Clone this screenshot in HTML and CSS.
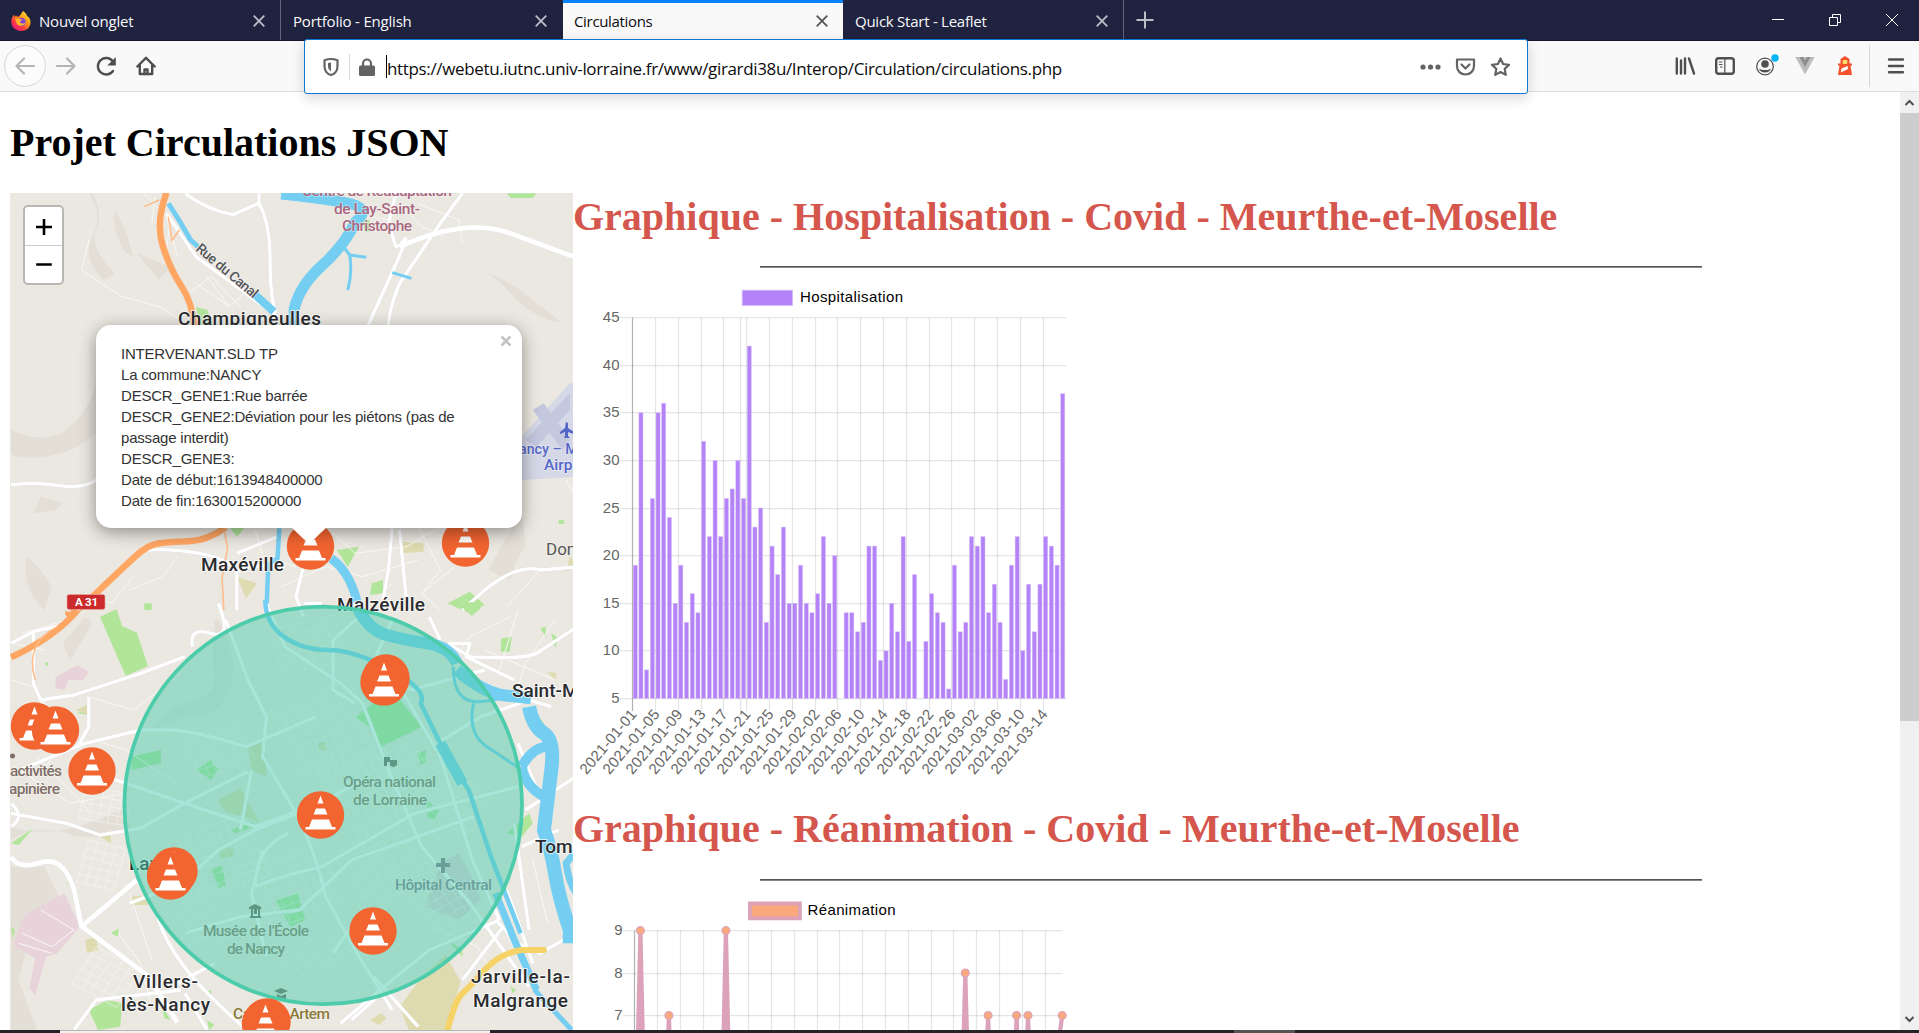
FILE: index.html
```
<!DOCTYPE html>
<html lang="fr">
<head>
<meta charset="utf-8">
<title>Circulations</title>
<link rel="stylesheet" href="styles.css">
</head>
<body>
<header class="tabs">
  <div class="tab">
    <svg class="favicon" viewBox="0 0 20 20"><defs><linearGradient id="fx" x1="1" y1="0" x2=".2" y2="1"><stop offset="0" stop-color="#fff44f"/><stop offset=".45" stop-color="#ff980e"/><stop offset=".75" stop-color="#ff3647"/><stop offset="1" stop-color="#e31587"/></linearGradient></defs><path fill="url(#fx)" d="M12 0c3 2 4 4 4 5 2 1 4 4 3.500 7C19 17 15 20 10 20S.5 16.500.3 11C.2 8 1.500 5 3 3.500V6l2-1.500L7 6c2-1 3-3 5-6z"/><circle cx="10.500" cy="11" r="4.300" fill="#8045d8"/><path fill="#ffb52e" d="M4 8c3-1 5 0 8 1-2 0-3 1-3 2 1 2 4 2 6 0-1 4-7 5-9 2-1-2-1-4-2-5z"/></svg>
    <span class="t1">Nouvel onglet</span>
    <svg class="x" viewBox="0 0 12 12"><path d="M.7.7l10.600 10.600M11.300.7L.7 11.300"/></svg>
  </div>
  <div class="tab"><span class="t2">Portfolio - English</span><svg class="x" viewBox="0 0 12 12"><path d="M.7.7l10.600 10.600M11.300.7L.7 11.300"/></svg></div>
  <div class="tab active"><span class="t3">Circulations</span><svg class="x" viewBox="0 0 12 12"><path d="M.7.7l10.600 10.600M11.300.7L.7 11.300"/></svg></div>
  <div class="tab"><span class="t4">Quick Start - Leaflet</span><svg class="x" viewBox="0 0 12 12"><path d="M.7.7l10.600 10.600M11.300.7L.7 11.300"/></svg></div>
  <svg class="plus" viewBox="0 0 18 18"><path d="M9 .5v17M.5 9h17"/></svg>
  <div class="winbtns">
    <svg viewBox="0 0 14 14"><path d="M1 6.500h12"/></svg>
    <svg viewBox="0 0 14 14"><path d="M1.500 4.500h8v8h-8zM4.500 4V1.500h8v8H10"/></svg>
    <svg viewBox="0 0 14 14"><path d="M1 1l12 12M13 1L1 13"/></svg>
  </div>
</header>

<nav class="toolbar">
  <svg class="back" viewBox="0 0 42 42"><circle cx="21" cy="21" r="20.400" fill="#fcfcfc" stroke="#d6d6d6"/><path class="dim" d="M30 21H12.500M20 13.500L12.500 21l7.500 7.500"/></svg>
  <svg class="ico" viewBox="0 0 40 40"><path class="dim" d="M11 20h17.500M21 12.500l7.500 7.500-7.500 7.500"/></svg>
  <svg class="ico" viewBox="0 0 40 40"><path class="ln" d="M27 25a8.300 8.300 0 1 1 0-9.500"/><path class="sd" d="M29.800 11v8.500h-8.500z"/></svg>
  <svg class="ico" viewBox="0 0 40 40"><path class="ln" d="M11.300 20.500L20 11.800l8.700 8.700M13.800 19v9h12.400v-9"/><path class="ln" d="M18.500 28v-4.500h3V28"/></svg>
  <div class="spacer"></div>
  <svg class="ico" viewBox="0 0 40 40"><path class="ln" d="M11.800 12.500v15M16 14.500v13M20 12.500v15M24 12.500l5 15"/></svg>
  <svg class="ico" viewBox="0 0 40 40"><rect class="ln" x="11.200" y="12.200" width="17.600" height="15.600" rx="2.500"/><path class="thin" d="M19.800 12v16M14 16h3.500M14 18.500h3.500M15 21h2.500"/></svg>
  <svg class="ico" viewBox="0 0 40 40"><circle cx="20" cy="20.500" r="8.300" class="thin"/><circle cx="20" cy="18" r="3.800" class="sd"/><path class="sd" d="M14 22.500c2 1 3 1.500 6 1.500s4-.5 6-1.500c-.8 2.700-3 4-6 4s-5.200-1.300-6-4z"/><circle cx="30" cy="12" r="3.700" fill="#00b3f4"/></svg>
  <svg class="ico" viewBox="0 0 40 40"><path fill="#bdbdbd" d="M10.300 11h19.400L20 28.500z"/><path fill="#8d8d8d" d="M14.500 11h3.500l2 3.500 2-3.500h3.500L20 21z"/></svg>
  <svg class="ico" viewBox="0 0 40 40"><path fill="#f4512c" d="M20 10l4.500 3v4.500H27v2h-1.500l1.500 9.500H13l1.500-9.500H13v-2h2.500V13z"/><path fill="#ffdf6b" d="M17.800 14h4.400v4h-4.400z"/><path fill="#fff" d="M16.500 22.500l6-2.500.7 3-7.500 3.500z"/></svg>
  <div class="sep"></div>
  <svg class="ico" viewBox="0 0 40 40"><path class="ln" d="M13 13.500h14M13 20h14M13 26.300h14"/></svg>
  <div class="urlbar">
    <svg class="u-shield" viewBox="0 0 18 20"><path class="ln" d="M9 2c2.500 0 4.500.5 6.500 1.200V9c0 5-3 8.300-6.500 9-3.500-.7-6.500-4-6.500-9V3.200C4.500 2.500 6.500 2 9 2z"/><path class="sd" d="M9 5.500v9C7 13 6 11.500 6 9V6z"/></svg>
    <div class="u-sep"></div>
    <svg class="u-lock" viewBox="0 0 18 20"><path class="ln" d="M5 10V6.500a4 4 0 0 1 8 0V10"/><rect class="sd" x="1" y="8.500" width="16" height="10.500" rx="1.500"/></svg>
    <div class="caret"></div>
    <span class="url">https://webetu.iutnc.univ-lorraine.fr/www/girardi38u/Interop/Circulation/circulations.php</span>
    <svg class="u-act" viewBox="0 0 35 30"><g class="sd"><circle cx="10" cy="15" r="2.600"/><circle cx="17.500" cy="15" r="2.600"/><circle cx="25" cy="15" r="2.600"/></g></svg>
    <svg class="u-act" viewBox="0 0 35 30"><path class="ln" d="M9 7.500h17v6.500c0 5-3.800 8.500-8.500 8.500S9 19 9 14z"/><path class="ln" d="M13.500 12.500l4 4 4-4"/></svg>
    <svg class="u-act" viewBox="0 0 35 30"><path class="ln" d="M17.500 6.500l2.600 5.500 6 .8-4.400 4.100 1.100 6-5.300-2.900-5.300 2.900 1.100-6-4.400-4.100 6-.8z"/></svg>
  </div>
</nav>

<div class="viewport">
  <main class="page">
    <h1>Projet Circulations JSON</h1>
    <div class="columns">
      <div class="map">
        <svg class="tiles" viewBox="10 193 563 837">
          <defs>
            <g id="cone"><circle r="23.700" fill="#f26430"/><path fill="#fff" d="M0-19.500l3 8h-6zM-4.500-6.500h9l2.500 6H-7zM-8.500 4.500h17l3 7.500H15v2.500h-30V12h3.500z"/></g>
          </defs>
          <rect x="10" y="193" width="563" height="837" fill="#ebe8e1"/>

          <!-- northern half -->
          <g class="geo" transform="translate(0 190) scale(.37 .33333)">
            <path class="relief" d="M250 10q30 60 10 110t50 130l-30 20q-60-60-30-130T240 10zM310 60q30 50 50 140l-20-10q-40-70-30-130zM370 190l90 40-30 40zM30 720q100 50 160-10t70-140v160q-60 60-140 70T30 790zM1260 230q90 20 170 90t90 80q-90-20-140-90t-120-80zM1410 960q-60 120-90 180l60 30q10-60 40-100zM70 1100q40 30 70 90l-20 70q-60-60-50-160zM110 920l60 20-20 20-60 10z"/>
            <path class="air" d="M1410 740l130-160h20v280l-150 10z"/><path fill="#c4c8df" d="M1440 660l30-20 70 110-20 30zM1420 750l120-140v50l-90 110z"/>
            <path class="green" d="M1370 10h80l-10 14h-60zM910 1080l60-10-30 60zM1005 1180l30-10v40l-35 5zM1210 1240l60-35 40 40-50 20zM530 350l30 10 20 50h-40zM620 1010l40 5-20 25zM1510 990h15v12h-15zM980 90h18v35h-12zM390 1240h20v20h-20z"/>
            <path class="olive" d="M1085 1055l60 5v25l-60 5zM640 1160l55 20-30 45zM1540 1100l20 20-30 25z"/>
            <g class="minor">
              <path d="M390 10l60 70 30 120M240 150l-20 90 110 80 100 30 60 40M460 90l-10 90M530 280l90 70 50-50M560 260l60 90M510 310l60-50 80 90M1200 140l-60-30-70-80M1250 160l-10-70-110-50M920 10l40 60 90 20M870 600l-90 80M480 1100l-40 60-90 40M690 1020l20 80 90 30M900 1030l60 60 140-20 90-60M1130 1010l60 130-50 70M760 1190l120-60 100 30 150-50M1190 1260l-50-50 90-80M230 1210l70 30 60-80M1370 1250l90-110M1530 870l20 40M1060 1180l-60 70M420 20l-10 80"/>
            </g>
            <g class="road">
              <path d="M500 10q60 50 130 64l70-35V10M700 40q30 60 30 170t15 160"/>
              <path d="M1070 10l-20 90 20 70 130-50M1250 10l-60 90-110 180q-30 80-30 130M1080 170q50-90-50 150t-20 90"/>
              <path class="wide" d="M1080 170q180-90 300-40l170 70"/>
              <path d="M450 70l80 130 220 180"/><path d="M30 885q60-10 130 2t110-25"/>
              <path d="M400 1080q70-5 140 10t100 50v120M640 1090l110-50M640 1140q70-20 130-10M1060 1010l-10 130-20 120M1080 1020l20 230M1310 1200q90-80 150-60l110-10M1310 1200l-60 60M820 1130l-20 90 20 60"/>
            </g>
            <g class="water">
              <path d="M455 40q30 50 60 110l20 20" stroke-width="5"/><path d="M690 315l50 50" stroke-width="8"/>
              <path d="M760 12q90 10 170 25t30 60q-30 70-90 130t-75 130v50" stroke-width="11"/>
              <path d="M925 165l20 30 45 7M945 195q8 50-5 105M1060 248l52 17" stroke-width="3"/>
              <path d="M755 1015l-5 90-25 20-5 140" stroke-width="4.500"/><path d="M895 1105q50 40 70 130" stroke-width="9"/>
            </g>
            <g class="motor"><path d="M450 8q-30 90-10 160t50 120 35 120"/><path d="M610 1012q-50 40-100 42t-80 6-65 40-110 115-70 50"/></g>
            <path class="ramp" d="M430 30l-40 20M455 80l10 70 20-30M605 1015l10 60-15 90 5 95"/>
          </g>

          <!-- southern half -->
          <g class="geo" transform="translate(0 600) scale(.37 .33333)">
            <path class="relief" d="M590 60q60 120 30 210t-120 80l-90 40 60-70q120-30 110-90t0-170zM30 680q120 50 310-60l10 60q-90 50-170 20t-150 20zM30 800h90l40 90-80 120-30 130 50 150H30zM170 130l60-80 20 20-60 110z"/>
            <path class="pink" d="M150 230l60-35 30 20-15 25-40 0-10 30-25-5zM175 880l40 100-60 80-30 10-30 115-15-20 15-90-60-40 30-90 60-35zM1190 790l50-30 30 60 30 80-60 60-90-40z"/>
            <path class="green" d="M270 50l45-22 15 50 40 20 30 100-60 30-20-50-35-90zM240 1230l50-30 40 10-5 70-60 10zM120 190l10-5v15zM1235 10l60-5 5 20-25 22zM1355 115l28-5-5 45h-25zM1460 85l15-5 0 30zM1490 100l20 15-10 30zM960 350l60-50 40-30 80 110-110 60-20-50zM355 470l80-20v40l-80 20zM530 510l40-30 20 30-20 30zM745 900l60-20 20 80-40 20zM570 810l30-15 10 60-20 10zM1370 700l60-60 10 30-30 40zM1155 600l30 30-10 30-20-10zM1130 460l20-10v40l-15 5zM625 690l60-25v15l-50 20zM30 730l60-45-40 50zM205 340l40-10v15zM430 1200l30 60-15-5zM550 1180l20-10v15zM1210 1020l40 30v20zM300 1000l20-15v25zM560 1260l20 15-15 15zM1450 340l20 30 5 20-25-20zM30 980l10 10-5 25zM180 850l20-10v15zM1380 1160l15 10-10 10z"/>
            <path class="olive" d="M670 440l45-20 5 110-40-20zM590 600l60-35 50 100-90-30zM1080 1220l60-90 65-65 40 80-40 145h-100zM860 430l20-5v25h-20zM205 330l30-15v30zM355 890l50-5-5 30h-45zM230 1020l30-10 5 40-30 10zM1000 1260l30-20 15 15-20 20zM590 750l40-10v30l-35 5zM270 710l30-5v25zM1480 215l25 5-5 20z"/>
            <g id="streets" class="minor"></g>
            <g class="minor">
              <path d="M30 240l60 20M60 100l120-40M120 300l20 170-30 60M240 290l120 40 130-110M250 420l90 30 150 110M40 500l150 110 150-30M320 1000l60 90 30 130M100 470l140 160M60 1000l80 40 60-50-90-60M50 1030l90 30M350 880l60 200M1170 980l120 60 50 100M1350 960l90 200 40 90M1500 60l-80 130-30 110M1400 30l-50 180M1310 150l190 90M1440 780l40 190M1210 200l60-90 110-60M30 130l90 20"/>
            </g>
            <g class="road">
              <path d="M30 130l60-35 80-20 60-70M110 300l90-15 180-65 120-50M30 520l200-90 150-40 85 0q70 5 200 50l190-90M300 535l200 75 190 70 120-50M240 290v90l-30 60M90 100v150l40 100M30 610q40 40 0 70M30 640l150 30 90 35 110-20 110-70 180-100"/>
              <path d="M610 60l60 180 50 110-10 120 80 150q60 120 90 270l90 180 90 160M720 10l50 130 150 110 60 60 70 200 90 230 130 170 160 250"/>
              <path d="M870 10l-50 0M990 30l-90 90v150l60 40M1060 60l-60 150 110 60 200-60M1070 240l120 230 90 320 70 170M350 910l140-60 100-100 100-60 140-60 150-90M420 930q30 130 150 260t120 110M690 860q60-30 180-60l250-160 280-80M690 860q0-120 90-160M680 510l-30 180M500 1000l150-50 160-20 140-150 330-130M710 750l-30 130 40 190M900 1060l80-130M1410 740l100-50M560 1290l-60-110M200 1290l60-90 230-30M580 1090l-100 60M1010 1130l120 150M920 1270l140-130 100-90 190-90M950 1260l70-70"/>
              <path d="M520 140q-10-60 50-40t20-90M1210 130h60l-10 40 130 70M1260 170q150 10 190-10l110-80M1420 630l150-110M1180 430l120-80 130-50 60 20M1400 430l60 160 30 120M1390 670l40 320M1340 960l60 70 60 30 110-70M1250 1140l110-160M1370 870l70 220M1160 50l30 70M1210 130l60 40"/>
              <path class="wide" d="M30 770q20 40 80 18t90 80l20 110 180 150 80 140M220 980l150-140"/>
            </g>
            <g class="water">
              <path d="M717 0q0 70 50 110t120 40 170 60 80 100l70 160 60 100 60 200 80 230" stroke-width="4.500"/>
              <path d="M1190 430l60 120" stroke-width="11"/><path d="M1340 880l50 140 60 150" stroke-width="7"/><path d="M1445 1170l100 120" stroke-width="5"/>
              <path d="M965 20q30 70 80 85t110 25 80 60" stroke-width="12"/>
              <path d="M1235 210q60 60 120 75l80 10" stroke-width="12"/><path d="M1225 200q0 110 70 105t60-20M1280 310q-20 100 50 140l80 60" stroke-width="3"/>
              <path d="M1430 320q10 60 40 80t20 110-20 180q20 60 30 130t40 170v40" stroke-width="14"/>
              <path d="M1410 500q30-60 70-60M1410 500q10 60 60 90" stroke-width="10"/><path d="M1560 750l-30 40q10 80 40 100" stroke-width="7"/>
            </g>
            <g class="motor"><path d="M210 30q-60 80-180 142"/></g><path class="ramp" d="M155 80q-90 50-60 160"/>
            <path class="yellow" d="M1470 1050h-60q-60 10-100 60t-60 70-40 110"/>
          </g>

          <g class="lbl city">
            <text x="178" y="325" textLength="143">Champigneulles</text>
            <text x="201" y="571" textLength="83">Maxéville</text>
            <text x="337" y="611" textLength="88">Malzéville</text>
            <text x="512" y="697">Saint-Max</text>
            <text x="535" y="853">Tomblaine</text>
            <text x="129" y="870">Laxou</text>
            <text x="133" y="988" textLength="65">Villers-</text>
            <text x="121" y="1011" textLength="89">lès-Nancy</text>
            <text x="471" y="983" textLength="99">Jarville-la-</text>
            <text x="473" y="1007" textLength="95">Malgrange</text>
          </g>
          <g class="lbl poi">
            <g fill="#a9677f"><text x="302" y="196" textLength="150">Centre de Réadaptation</text><text x="334" y="214" textLength="86">de Lay-Saint-</text><text x="342" y="231" textLength="70">Christophe</text></g>
            <g fill="#5566c8"><text x="509" y="454" textLength="88" lengthAdjust="spacingAndGlyphs">Nancy – Metz</text><text x="544" y="470">Airport</text><path stroke="none" d="M566 422l2 1v5l6 4v2l-6-2v4l2 2h-6l1-2v-4l-5 2v-2l5-4z"/></g>
            <text x="546" y="555" class="mid">Dommartemont</text>
            <g fill="#806e66"><text x="10" y="776" textLength="52">activités</text><text x="9" y="794" textLength="51">apinière</text><circle cx="12.500" cy="756" r="2.500" stroke="none"/></g>
            <g fill="#8a7263"><text x="343" y="787" textLength="93">Opéra national</text><text x="353" y="805" textLength="74">de Lorraine</text><text x="203" y="936" textLength="106">Musée de l’École</text><text x="227" y="954" textLength="58">de Nancy</text></g>
            <g fill="#857288"><text x="395" y="890" textLength="97">Hôpital Central</text><path stroke="none" d="M441 858h4v5h5v4h-5v6h-4v-6h-5v-4h5z"/></g>
            <text x="233" y="1019" textLength="97" fill="#8a7a3a">Campus Artem</text>
            <g class="sym"><path d="M384 757h6v5h-3v4h-3zM390 760h7v5q-4 4-7 0zM249 907l6-3 6 3v2h-12zM250 916h11v2h-11zM251 909h2v7h-2zM254 909h3v5h-3zM258 909h2v7h-2zM274 991l7-3 7 3-7 3zM277 994l4 2 5-2v5h-9z"/></g>
            <text class="street" transform="translate(195 250) rotate(40)" textLength="76">Rue du Canal</text>
          </g>
          <rect x="67" y="594.500" width="38" height="15" rx="2" fill="#cb2b2c" stroke="#e9a9a4" stroke-width=".6"/><text class="shield" x="75" y="606" textLength="23">A 31</text>
          <circle cx="323.200" cy="805.300" r="198.800" fill="#4bcdae" fill-opacity=".49" stroke="#4dccab" stroke-width="3.750"/>
          <g id="cones"></g>
        </svg>
        <div class="zoomctl"><svg viewBox="0 0 37 38"><path d="M11 20h16M19 12v16"/></svg><svg viewBox="0 0 37 38"><path d="M11 19h16"/></svg></div>
        <div class="popup">INTERVENANT.SLD TP<br>La commune:NANCY<br>DESCR_GENE1:Rue barrée<br>DESCR_GENE2:Déviation pour les piétons (pas de<br>passage interdit)<br>DESCR_GENE3:<br>Date de début:1613948400000<br>Date de fin:1630015200000<svg class="close" viewBox="0 0 12 12"><path d="M1.500 1.500l9 9M10.500 1.500l-9 9"/></svg><svg class="tip" viewBox="0 0 36 17"><path d="M0 0h36L18 17z"/></svg></div>
      </div>
      <div class="charts">
        <h1 class="red">Graphique - Hospitalisation - Covid - Meurthe-et-Moselle</h1>
        <hr>
        <svg id="hosp" class="chart" viewBox="573 268 560 538" width="560" height="538"></svg>
        <h1 class="red">Graphique - Réanimation - Covid - Meurthe-et-Moselle</h1>
        <hr>
        <svg id="rea" class="chart" viewBox="573 881 560 149" width="560" height="149"></svg>
      </div>
    </div>
  </main>
  <aside class="scrollbar">
    <svg viewBox="0 0 19 21"><path d="M5.500 13l4-4 4 4"/></svg>
    <div class="thumb"></div>
    <svg class="down" viewBox="0 0 19 21"><path d="M5.500 8l4 4 4-4"/></svg>
  </aside>
</div>
<footer class="taskbar"><div class="preview"></div><div class="app"></div></footer>
<script src="charts.js"></script>
</body>
</html>
```
FILE: styles.css
```
* { box-sizing: border-box; }
body { margin: 0; width: 1919px; height: 1033px; overflow: hidden; background: #fff; display: flex; flex-direction: column; font-family: "Liberation Serif", serif; }
svg { display: block; flex: none; }

.tabs { height: 41px; flex: none; background: #202340; border-bottom: 1px solid #14142c; display: flex; align-items: center; font: 15px "Open Sans", "Noto Sans", sans-serif; color: #f9f9fa; }
.tab { width: 281px; height: 40px; display: flex; align-items: center; padding: 2px 15px 0 12px; border-right: 1px solid #62647a; white-space: nowrap; }
.tab:nth-child(2) { width: 282px; border-right: 0; padding-right: 16px; }
.tab .x { margin-left: auto; width: 12px; height: 12px; fill: none; stroke: #bcbdc8; stroke-width: 1.8; }
.tab.active { width: 280px; background: #f9f9fa; color: #0c0c0d; border-top: 3px solid #0a84ff; border-right: 0; padding: 0 15px 1px 11px; }
.tab.active .x { stroke: #55555a; }
.favicon { width: 20px; height: 20px; margin: -1px 8px 0 -1px; }
.t1 { letter-spacing: -.2px; }
.t2 { letter-spacing: -.2px; }
.t3 { letter-spacing: -.33px; }
.t4 { letter-spacing: -.25px; }
.plus { width: 18px; height: 18px; margin-left: 12px; fill: none; stroke: #bcbdc8; stroke-width: 2; }
.winbtns { margin-left: auto; display: flex; gap: 43px; padding-right: 20px; }
.winbtns svg { width: 14px; height: 14px; fill: none; stroke: #fff; stroke-width: 1; }

.toolbar { position: relative; z-index: 2; height: 51px; flex: none; background: #f9f9fa; border-bottom: 1px solid #dcdcdc; display: flex; align-items: center; padding: 0 3px 0 4px; }
.back { width: 42px; height: 42px; }
.ico { width: 40px; height: 40px; }
.spacer { flex: 1; }
.sep { width: 1px; height: 42px; background: #d7d7db; margin: 0 6px 0 4px; }
.dim { fill: none; stroke: #b5b5b6; stroke-width: 2.2; stroke-linecap: round; stroke-linejoin: round; }
.ln { fill: none; stroke: #4f4f51; stroke-width: 2.4; stroke-linecap: round; stroke-linejoin: round; }
.thin { fill: none; stroke: #4f4f51; stroke-width: 1.2; }
.sd { fill: #4f4f51; }
.urlbar { position: absolute; left: 304px; top: -2px; width: 1224px; height: 55px; background: #fff; border: 1px solid #0a78d4; border-radius: 3px; box-shadow: 0 4px 14px rgba(0,0,0,.16); display: flex; align-items: center; padding: 0 9px 0 17px; }
.urlbar .ln { stroke: #636365; stroke-width: 2.2; }
.urlbar .sd { fill: #636365; }
.u-shield, .u-lock { width: 18px; height: 20px; }
.u-sep { width: 1px; height: 26px; margin: 0 8px 0 9px; background: #dcdcdc; }
.caret { width: 1px; height: 23px; margin-left: 10px; background: #000; }
.url { flex: 1; font: 17px "Open Sans", "Noto Sans", sans-serif; letter-spacing: -.35px; color: #0c0c0d; white-space: nowrap; padding-top: 3px; }
.u-act { width: 35px; height: 30px; }

.viewport { flex: 1; min-height: 0; display: flex; overflow: hidden; }
.page { flex: 1; padding: 28px 10px 0; overflow: hidden; }
h1 { margin: 0; font-size: 40px; line-height: 46px; font-weight: bold; white-space: nowrap; }
.columns { display: flex; margin-top: 27px; height: 837px; }
.map { position: relative; width: 563px; height: 837px; overflow: hidden; flex: none; }
.tiles { width: 563px; height: 837px; }
.charts { flex: 1; overflow: hidden; }
.red { color: #d4564c; }
.red:first-child { line-height: 48px; margin-bottom: -2px; }
hr { width: 942px; height: 2px; border: 0; border-top: 1px solid #555; border-bottom: 1px solid #888; margin: 27px 0 0 187px; }

.geo path { vector-effect: non-scaling-stroke; }
.relief { fill: #ddd9d0; opacity: .6; }
.air { fill: #d5d8e6; }
.green { fill: #b1e59a; }
.olive { fill: #dfdbb0; }
.pink { fill: #e9d3da; }
.minor { fill: none; stroke: #f9f8f6; stroke-width: 1; }
.road { fill: none; stroke: #fff; stroke-width: 3.4; stroke-linejoin: round; filter: drop-shadow(0 0 1px #c6c8da); }
.road .wide { stroke-width: 5; }
.water { fill: none; stroke: #74cef2; stroke-linejoin: round; }
.motor { fill: none; stroke: #ffa663; stroke-width: 6.5; }
.ramp { fill: none; stroke: #ffbb88; stroke-width: 1.5; }
.yellow { fill: none; stroke: #f5d367; stroke-width: 6; stroke-linecap: round; }
.lbl { font-family: Roboto, sans-serif; paint-order: stroke; stroke: rgba(255,255,255,.75); stroke-width: 2px; }
.city { font-size: 19px; font-weight: 500; fill: #2b2c30; }
.poi { font-size: 15.5px; font-weight: 500; stroke: rgba(255,255,255,.45); stroke-width: 1.5px; }
.mid { font-size: 17px; font-weight: 400; fill: #555; }
.street { font-size: 14px; fill: #55565a; }
.sym { fill: #6a655a; stroke: none; }
.shield { font: bold 11.5px Roboto, sans-serif; fill: #fff; }

.zoomctl { position: absolute; left: 13px; top: 12px; width: 41px; height: 80px; border: 2px solid #b9b7b2; border-radius: 5px; background: #fff; display: flex; flex-direction: column; overflow: hidden; }
.zoomctl svg { width: 37px; height: 38px; fill: none; stroke: #000; stroke-width: 2.6; }
.zoomctl svg + svg { border-top: 1px solid #ccc; }
.popup { position: absolute; left: 86px; top: 132px; width: 426px; height: 203px; padding: 18px 25px; border-radius: 15px; background: #fff; color: #333; box-shadow: 0 4px 17px rgba(0,0,0,.4); font: 15px/21px "Liberation Sans", Arial, sans-serif; letter-spacing: -.2px; white-space: nowrap; }
.close { position: absolute; right: 10px; top: 10px; width: 12px; height: 12px; fill: none; stroke: #c3c3c3; stroke-width: 2.6; }
.tip { position: absolute; left: 195px; top: 202px; width: 36px; height: 17px; fill: #fff; }

.chart text { font: 15px "Liberation Sans", Arial, sans-serif; fill: #666; }
.chart .legend { fill: #000; }
.grid { stroke: rgba(0,0,0,.1); stroke-width: 1.25; }
.axis { stroke: rgba(0,0,0,.3); stroke-width: 1.25; }
.bar { fill: #b483f7; stroke: #d9c0fb; stroke-width: .5; }
.line { fill: #f9a97b; stroke: #dba2ba; stroke-width: 4.2; stroke-linejoin: round; }
.dot { fill: #f9a97b; stroke: #dba2ba; stroke-width: 1.25; }

.scrollbar { width: 19px; flex: none; background: #f0f0f0; display: flex; flex-direction: column; }
.scrollbar svg { width: 19px; height: 21px; fill: none; stroke: #505050; stroke-width: 2; }
.thumb { height: 608px; background: #cdcdcd; }
.scrollbar .down { margin-top: auto; }
.taskbar { height: 3px; flex: none; background: #262328; display: flex; }
.preview { width: 430px; margin-left: 60px; background: #f1f1f1; border-top: 1px solid #b5b5b5; }
.app { width: 61px; margin-left: 744px; background: #555; }
```
FILE: charts.js
```
const NS = 'http://www.w3.org/2000/svg';
function add(parent, tag, attrs, text) {
  const el = document.createElementNS(NS, tag);
  for (const k in attrs) el.setAttribute(k, attrs[k]);
  if (text !== undefined) el.textContent = text;
  parent.appendChild(el);
  return el;
}

const STEP = 5.7;
const hosp = document.getElementById('hosp');
const values = [19,35,8,26,35,36,24,15,19,13,16,14,32,22,30,22,26,27,30,26,42,23,25,13,21,18,23,15,15,19,15,14,16,22,15,20,5,14,14,12,13,21,21,9,10,15,12,22,11,18,5,11,16,14,13,6,19,12,13,22,21,22,14,17,13,7,19,22,10,17,12,17,22,21,19,37];
const x0 = 632.6, yBase = 698.5, unit = 9.525;
const snap = v => Math.floor(v) + 0.5;

for (let v = 5; v <= 45; v += 5) {
  const y = snap(yBase - (v - 5) * unit);
  add(hosp, 'line', { class: 'grid', x1: 620, x2: 1065.8, y1: y, y2: y });
  add(hosp, 'text', { x: 619.5, y: y + 4.5, 'text-anchor': 'end' }, v);
}
for (let k = 0; k < 19; k++) {
  const x = snap(x0 + k * 4 * STEP);
  add(hosp, 'line', { class: k ? 'grid' : 'axis', x1: x, x2: x, y1: 317.5, y2: 711 });
  const day = new Date(Date.UTC(2021, 0, 1 + 4 * k)).toISOString().slice(0, 10);
  add(hosp, 'text', { transform: `translate(${x + 1} 711.5) rotate(-50)`, y: 5, 'text-anchor': 'end', textLength: 79 }, day);
}
add(hosp, 'line', { class: 'grid', x1: 740.5, x2: 740.5, y1: 317.5, y2: 711 });
values.forEach((v, i) => {
  const h = (v - 5) * unit;
  if (h) add(hosp, 'rect', { class: 'bar', x: x0 + i * STEP + 0.6, y: yBase - h, width: 4.1, height: h });
});
add(hosp, 'rect', { x: 742.2, y: 290.2, width: 50.2, height: 15.2, fill: '#b483f7', stroke: '#d4b8fa', 'stroke-width': 0.8 });
add(hosp, 'text', { class: 'legend', x: 800, y: 302, textLength: 103 }, 'Hospitalisation');

const rea = document.getElementById('rea');
const rx = 634.7, yOf = v => 930.6 + (9 - v) * 42.4;
for (let v = 9; v >= 7; v--) {
  const y = snap(yOf(v));
  add(rea, 'line', { class: 'grid', x1: 623, x2: 1062.5, y1: y, y2: y });
  add(rea, 'text', { x: 622.5, y: y + 4.5, 'text-anchor': 'end' }, v);
}
for (let k = 0; k < 19; k++) {
  const x = snap(rx + k * 4 * STEP);
  add(rea, 'line', { class: k ? 'grid' : 'axis', x1: x, x2: x, y1: 930.5, y2: 1040 });
}
const peaks = { 1: 9, 6: 7, 16: 9, 58: 8, 62: 7, 67: 7, 69: 7, 75: 7 };
for (const i in peaks) {
  const x = rx + i * STEP, y = yOf(peaks[i]), side = STEP;
  const low = i === '75' ? 6 : 3;
  const right = i === '75' ? '' : `L${x + side} ${yOf(low)}`;
  add(rea, 'path', { class: 'line', d: `M${x - side} ${yOf(low)}L${x} ${y}${right}` });
  add(rea, 'circle', { class: 'dot', cx: x, cy: y, r: 3.9 });
}
add(rea, 'rect', { x: 749.9, y: 903.4, width: 50, height: 15, fill: '#f9a97b', stroke: '#dba2ba', 'stroke-width': 3.75 });
add(rea, 'text', { class: 'legend', x: 807.5, y: 915, textLength: 88 }, 'Réanimation');

const cones = document.getElementById('cones');
[[310.5,546],[465.5,543],[386,678],[384,682],[34.5,726],[55.5,730],[92,771],[320.5,815],[174,871],[170.5,876],[373,931],[267,1022],[265.5,1024]]
  .forEach(([x, y]) => add(cones, 'use', { href: '#cone', x, y }));

// residential street mesh: [x, y, columns, rows, cell width, cell height, angle]
const streets = document.getElementById('streets');
[[480,420,8,5,22,26,-20],[730,330,9,9,26,26,-22],[860,520,8,8,24,28,-24],[450,720,8,7,28,28,-20],[640,800,9,8,26,26,-20],[900,760,8,8,28,26,-24],[1000,480,7,7,26,28,-24],[730,90,6,5,30,28,-15],[1120,600,7,6,26,26,-30],[230,560,5,4,26,24,10],[260,1040,5,5,28,26,30],[450,930,6,5,28,30,-28],[750,1070,7,4,30,28,-30],[1120,900,5,5,26,28,-30],[240,720,4,5,26,26,15]]
  .forEach(([x, y, c, r, w, h, a]) => {
    let d = '';
    for (let i = 0; i <= c; i++) d += `M${i * w} 0V${r * h}`;
    for (let j = 0; j <= r; j++) d += `M0 ${j * h}H${c * w}`;
    add(streets, 'path', { d, transform: `translate(${x} ${y}) rotate(${a})`, opacity: 0.55 });
  });
```
